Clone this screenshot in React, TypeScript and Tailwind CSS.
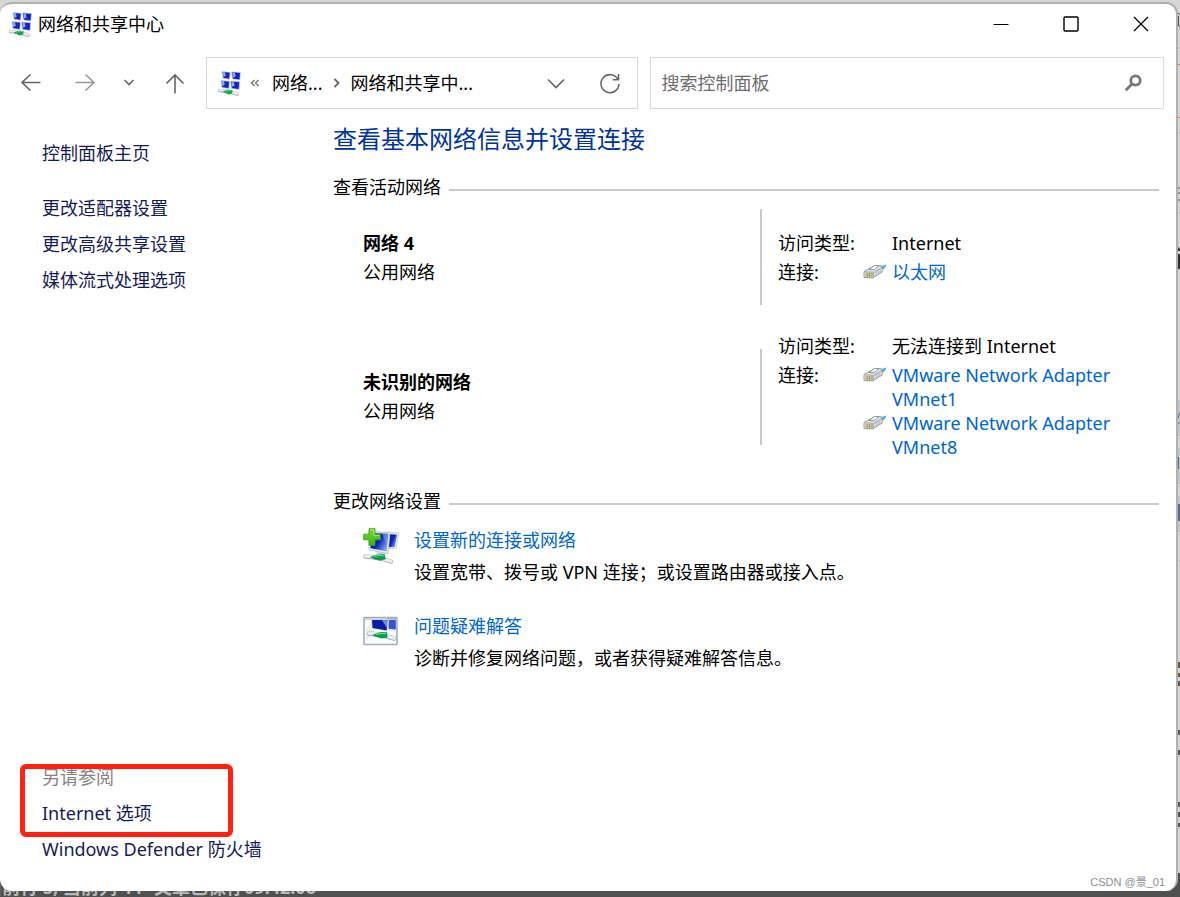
import { twMerge } from "tailwind-merge";

interface IconProps {
    className?: string;
}

function NetworkCenterIcon({ className }: IconProps) {
    return (
        <svg viewBox="0 0 24 26" className={twMerge("h-[26px] w-6 shrink-0", className)} aria-hidden="true">
            <g stroke="#d9dfec" strokeWidth="0.7">
                <path d="M4 1.500l8.200.7-.6 7-6.600-.9z" fill="#1222c4" />
                <path d="M13.500 1.800l9 .6-.6 7.600-7.400-1z" fill="#1222c4" />
                <path d="M3 10.500l8.500.8-.6 7.200-7-.9z" fill="#1222c4" />
                <path d="M12.500 11l9.200.7-.6 7.800-7.600-1z" fill="#1222c4" />
            </g>
            <path d="M4.800 2l2.200.2.7 3.600-2.300 1.400zM14.300 2.300l2.500.2.800 3.700-2.700 1.500zM3.800 11l2.200.2.800 3.600-2.500 1.400zM13.300 11.500l2.500.2.900 3.700-2.900 1.500z" fill="#8fa9f2" />
            <path d="M1.500 20.500l6 .8 6 1.200 5.500 1.700" stroke="#a7b0b3" strokeWidth="3.500" strokeLinecap="round" fill="none" />
            <path d="M1.500 20.200l6 .8 6 1.200 5.500 1.700" stroke="#e9eeee" strokeWidth="2.300" strokeLinecap="round" fill="none" />
            <path d="M4.500 21.500l6-2 4 .8-.3 3.200-3.700 1z" fill="#0fa655" />
            <path d="M7 21.300l4-1.100 2.500.5" stroke="#4fd684" strokeWidth="0.900" fill="none" />
        </svg>
    );
}

function EthernetIcon() {
    return (
        <svg viewBox="0 0 24 16" className="mt-1 h-4 w-6 shrink-0" aria-hidden="true">
            <path d="M16 2.500L23.500.5l-1.500 3.500-4 3z" fill="#58b7e0" />
            <path d="M1 7.500l10-5.500 7-.3 1.500 3.500-.5 3-9.500 5.800-8.500-.5z" fill="#dfe3e6" stroke="#7c8791" strokeWidth="0.800" />
            <path d="M1.500 7.800l9 .5 8.500-4.800M10.500 8.300v5.500" fill="none" stroke="#98a1a9" strokeWidth="0.800" />
            <path d="M6 5.500l5.500-4h4.500L11 5.800z" fill="#f5f7f8" stroke="#7c8791" strokeWidth="0.800" />
            <path d="M3 8.800v4.400M5.400 8.800v4.400M7.800 8.800v4.400" stroke="#d8c65b" strokeWidth="1.200" />
            <path d="M4.200 8.800v4.400M6.600 8.800v4.400M9 8.800v4.400" stroke="#70694f" strokeWidth="0.700" />
            <path d="M12 9l5.500-3.500M12 11l6-4" stroke="#9da7ae" strokeWidth="0.700" />
        </svg>
    );
}

function NewConnectionIcon() {
    return (
        <svg viewBox="0 0 36 36" className="size-9 shrink-0" aria-hidden="true">
            <defs>
                <linearGradient id="screen" x1="0" y1="0" x2="1" y2="0.6">
                    <stop offset="0" stopColor="#0c1b9f" />
                    <stop offset="0.550" stopColor="#0b22b4" />
                    <stop offset="1" stopColor="#7ba0ef" />
                </linearGradient>
                <linearGradient id="plus" x1="0" y1="0" x2="0" y2="1">
                    <stop offset="0" stopColor="#7bdb35" />
                    <stop offset="1" stopColor="#2fb80f" />
                </linearGradient>
            </defs>
            <path d="M22 4l13.800 1-2.800 15.500-8 .5z" fill="#e6eaf1" stroke="#bfc6d1" strokeWidth="0.700" />
            <path d="M25 6l9 .7-2.300 12.300-6 .2z" fill="url(#screen)" />
            <path d="M14 23l9 2-1 3-9-1.500z" fill="#cfd4d7" />
            <path d="M6 3.500l21 1-2 21L6 22z" fill="#e9ecf2" stroke="#b5bcc8" strokeWidth="0.800" />
            <path d="M7.500 5l17.800.8-1.700 17.400L7.500 20.200z" fill="url(#screen)" />
            <path d="M19 5.500l6 .3-1 11z" fill="#8dabf0" opacity="0.550" />
            <path d="M2.500 28.500l8 .8 9 1.700 8.500 2.500" stroke="#a3aca9" strokeWidth="4.400" strokeLinecap="round" fill="none" />
            <path d="M2.500 28.200l8 .8 9 1.700 8.500 2.500" stroke="#e9efed" strokeWidth="3.200" strokeLinecap="round" fill="none" />
            <path d="M7 29l8-2.500 6.500-.2 1.300 5-6 1.200-6-1.500z" fill="#0c9a4c" />
            <path d="M11 28.500l5-1 4.500.3" stroke="#64de98" strokeWidth="1.200" fill="none" />
            <path d="M6 .7h6v5.500h5.300v5.600H12v5.500H6v-5.500H.7V6.200H6z" fill="url(#plus)" stroke="#3ea51f" strokeWidth="0.900" />
            <path d="M7 1.800h3.800v5.500h5.300" stroke="#b5f37d" strokeWidth="0.800" fill="none" />
        </svg>
    );
}

function TroubleshootIcon() {
    return (
        <svg viewBox="0 0 36 30" className="mt-0.5 h-[30px] w-9 shrink-0" aria-hidden="true">
            <rect x="1" y="1.500" width="33" height="27" rx="0.500" fill="#fafbfc" stroke="#a2abb6" strokeWidth="1.500" />
            <path d="M1.800 3h31.400" stroke="#ccd3dc" strokeWidth="1.800" />
            <path d="M25 2.800h1.200M28.400 2.800h1.200M31.400 2.800h1.200" stroke="#5d6672" strokeWidth="1" />
            <path d="M3 26V13L9 4h10z" fill="#eceff3" />
            <path d="M8 4h24.800v11.500L9 13z" fill="#e3e8f1" />
            <path d="M9 4h15.500l-.8 10.500L9.500 12z" fill="#0d1ba6" />
            <path d="M26 4h6.800v9.500l-7.300-.7z" fill="#3457c8" />
            <path d="M19 4h5.500l-.6 8z" fill="#6c8ae6" />
            <path d="M6 17.500l9 1 8 1.700 8 2.300" stroke="#a3aca9" strokeWidth="4.600" strokeLinecap="round" fill="none" />
            <path d="M6 17.200l9 1 8 1.700 8 2.300" stroke="#ebf0ee" strokeWidth="3.300" strokeLinecap="round" fill="none" />
            <path d="M9 19l9-3 6 .2.500 5.300-6 1-6-1.700z" fill="#0c9a4c" />
            <path d="M13 18.500l5-1.200 5 .4" stroke="#62dc94" strokeWidth="1.200" fill="none" />
        </svg>
    );
}

interface NavButtonProps {
    label: string;
    path: string;
    className?: string;
}

function NavButton({ label, path, className }: NavButtonProps) {
    return (
        <button type="button" aria-label={label} className={twMerge("flex h-8 shrink-0 items-center justify-center text-[#666]", className)}>
            <svg viewBox="0 0 24 24" className="size-6" fill="none" stroke="currentColor" strokeWidth="1.600" aria-hidden="true">
                <path d={path} />
            </svg>
        </button>
    );
}

function TitleBar() {
    return (
        <header className="flex h-10 items-center pl-[9px]">
            <NetworkCenterIcon />
            <h1 className="ml-[5px] flex-1">网络和共享中心</h1>
            <button type="button" aria-label="最小化" className="flex h-10 w-[70px] items-center justify-center">
                <svg viewBox="0 0 16 16" className="size-4" aria-hidden="true"><path d="M.5 8.500h15" stroke="#000" /></svg>
            </button>
            <button type="button" aria-label="最大化" className="flex h-10 w-[70px] items-center justify-center">
                <svg viewBox="0 0 16 16" className="size-4" aria-hidden="true"><rect x="1" y="1" width="14" height="14" rx="1" fill="none" stroke="#000" strokeWidth="1.400" /></svg>
            </button>
            <button type="button" aria-label="关闭" className="flex h-10 w-[70px] items-center justify-center">
                <svg viewBox="0 0 16 16" className="size-4" aria-hidden="true"><path d="M1 1l14 14M15 1L1 15" stroke="#000" strokeWidth="1.300" /></svg>
            </button>
        </header>
    );
}

function Toolbar() {
    return (
        <nav className="mt-[13px] flex items-center pr-3">
            <div className="flex w-[206px] shrink-0 items-center pl-[15px]">
                <NavButton label="后退" path="M21.500 11.500H3M11.500 3.500L3 11.500l8.500 8" className="w-8" />
                <NavButton label="前进" path="M2.500 11.500H21M12.500 3.500l8.500 8-8.500 8" className="ml-[22px] w-8 text-[#999]" />
                <NavButton label="最近浏览的位置" path="M7.500 9l4.500 4.500L16.500 9" className="ml-4 w-6" />
                <NavButton label="向上" path="M12 22.500V4M3.500 12.500L12 4l8.500 8.500" className="ml-[18px] w-8" />
            </div>
            <div className="grid flex-1 grid-cols-[16fr_19fr] gap-3">
                <div className="flex h-[52px] items-center border border-[#d9d9d9] pl-[11px]">
                    <NetworkCenterIcon />
                    <span className="ml-2 text-[#666]">
                        <svg viewBox="0 0 10 10" className="size-2.5" fill="none" stroke="currentColor" strokeWidth="1.200" aria-hidden="true"><path d="M4.500 2L1.500 5l3 3M8.500 2l-3 3 3 3" /></svg>
                    </span>
                    <button type="button" className="ml-3">网络...</button>
                    <svg viewBox="0 0 10 10" className="mx-[9px] size-2.5" fill="none" stroke="#666" strokeWidth="1.800" aria-hidden="true"><path d="M3.500 1l4 4-4 4" /></svg>
                    <button type="button">网络和共享中...</button>
                    <div className="ml-auto flex items-center gap-[22px] pr-[11px]">
                        <NavButton label="历史记录" path="M4 8.500l8 8 8-8" className="w-8" />
                        <button type="button" aria-label="刷新" className="flex size-8 items-center justify-center">
                            <svg viewBox="0 0 24 24" className="size-6" fill="none" stroke="#666" strokeWidth="1.600" aria-hidden="true">
                                <path d="M20 8.500A9 9 0 1 0 21 13M20.500 3v5.800h-5.800" />
                            </svg>
                        </button>
                    </div>
                </div>
                <label className="flex h-[52px] items-center border border-[#d9d9d9] pl-2.5 pr-5">
                    <input type="search" aria-label="搜索控制面板" placeholder="搜索控制面板" className="min-w-0 flex-1 outline-none placeholder:text-[#6d6d6d]" />
                    <svg viewBox="0 0 20 20" className="size-5" fill="none" stroke="#767676" aria-hidden="true">
                        <circle cx="12.500" cy="7.500" r="4.700" strokeWidth="2.800" />
                        <path d="M9 11L2.800 17.200" strokeWidth="2.800" />
                    </svg>
                </label>
            </div>
        </nav>
    );
}

function Sidebar() {
    return (
        <aside className="flex w-[333px] shrink-0 flex-col pt-8 pb-[30px] pl-[42px] text-[#151c55]">
            <a href="#home" className="self-start">控制面板主页</a>
            <ul className="mt-[31px] flex flex-col gap-3">
                <li><a href="#adapter">更改适配器设置</a></li>
                <li><a href="#sharing">更改高级共享设置</a></li>
                <li><a href="#media">媒体流式处理选项</a></li>
            </ul>
            <section className="mt-auto flex flex-col gap-3">
                <div className="relative flex flex-col gap-3">
                    <h2 className="text-[#838383]">另请参阅</h2>
                    <a href="#internet">Internet 选项</a>
                    <span className="pointer-events-none absolute -top-px -bottom-3 -left-[22px] w-[213px] rounded-md border-[5px] border-[#ff2212]" />
                </div>
                <a href="#firewall">Windows Defender 防火墙</a>
            </section>
        </aside>
    );
}

function SectionTitle({ title, className }: { title: string; className?: string }) {
    return (
        <div className={twMerge("flex items-center gap-2", className)}>
            <h3>{title}</h3>
            <span className="mt-1.5 h-0.5 flex-1 bg-[#c9c9c9]" />
        </div>
    );
}

interface NetworkRowProps {
    name: string;
    access: string;
    connections: string[];
    className?: string;
}

function NetworkRow({ name, access, connections, className }: NetworkRowProps) {
    return (
        <div className={twMerge("grid grid-cols-[1fr_2px_1fr] items-center pl-[30px]", className)}>
            <div className="flex flex-col gap-[5px]">
                <h4 className="font-bold">{name}</h4>
                <p>公用网络</p>
            </div>
            <span className="h-24 bg-[#c9c9c9]" />
            <dl className="grid grid-cols-[85px_1fr] gap-y-[5px] pl-4">
                <dt>访问类型:</dt>
                <dd className="pl-[29px]">{access}</dd>
                <dt>连接:</dt>
                <dd>
                    {connections.map((connection) => (
                        <a key={connection} href="#status" className="flex items-start gap-[5px] text-[#0066cc]">
                            <EthernetIcon />
                            <span>{connection}</span>
                        </a>
                    ))}
                </dd>
            </dl>
        </div>
    );
}

interface TaskProps {
    icon: React.ReactNode;
    title: string;
    description: string;
}

function Task({ icon, title, description }: TaskProps) {
    return (
        <div className="flex items-start gap-[15px]">
            {icon}
            <div className="flex flex-col items-start gap-2">
                <a href="#task" className="text-[#0066cc]">{title}</a>
                <p>{description}</p>
            </div>
        </div>
    );
}

function Content() {
    return (
        <main className="min-w-0 flex-1 pt-3 pr-[17px]">
            <h2 className="text-2xl leading-9 text-[#003399]">查看基本网络信息并设置连接</h2>
            <SectionTitle title="查看活动网络" className="mt-[18px]" />
            <NetworkRow name="网络 4" access="Internet" connections={["以太网"]} className="mt-2.5" />
            <NetworkRow
                name="未识别的网络"
                access="无法连接到 Internet"
                connections={["VMware Network Adapter VMnet1", "VMware Network Adapter VMnet8"]}
                className="mt-[29px]"
            />
            <SectionTitle title="更改网络设置" className="mt-[30px]" />
            <div className="mt-[15px] flex flex-col gap-[30px] pl-[30px]">
                <Task icon={<NewConnectionIcon />} title="设置新的连接或网络" description="设置宽带、拨号或 VPN 连接；或设置路由器或接入点。" />
                <Task icon={<TroubleshootIcon />} title="问题疑难解答" description="诊断并修复网络问题，或者获得疑难解答信息。" />
            </div>
        </main>
    );
}

// Parts of the page behind the window that show past its right and bottom edges
function Backdrop() {
    return (
        <div className="absolute inset-0 overflow-hidden" aria-hidden="true">
            <svg className="absolute top-0 right-0 h-[873px] w-1" viewBox="0 0 4 873">
                <path d="M0 48h4M0 133h4M0 213h4M0 561h4" stroke="#b5b5b5" />
                <path d="M0 64.500h4M0 117.500h4" stroke="#e0735c" />
                <path d="M2 13l2 2M2.500 16v10h1.500M2 188h2M2 193h2M2 200h2" stroke="#555" fill="none" />
                <path d="M1 246l3 3v2H1zM1 254h3v15H1z" fill="#303030" />
                <path d="M0 400h4v36H0zM0 448h4v36H0zM0 496h4v36H0z" fill="#c3c8cf" />
                <path d="M0 424l4-12M0 423h4M2.500 457v12" stroke="#536990" />
                <path d="M2 504h2v17H2z" fill="#52699c" />
                <path d="M2 662h2v6H2zM2 673h2v4H2zM2 681h2v5H2z" fill="#6c5745" />
                <path d="M0 730h4v5H0zM0 750h4v5H0zM0 802h4v5H0zM1 812h3v5H1zM0 823h4v4H0z" fill="#585858" />
            </svg>
            <div className="absolute inset-x-0 bottom-0 flex h-6 items-center gap-3 bg-[#505050] pt-1 text-lg font-bold whitespace-pre text-[#b8b8b8]">
                <span className="-ml-4">当前行 5, 当前列 44</span>
                <span>文章已保存09:42:06</span>
            </div>
        </div>
    );
}

export default function App() {
    return (
        <div className="relative flex min-h-screen flex-col bg-[#d6d6d6] pt-0.5 pr-0.5 pb-1.5 font-['Noto_Sans','Noto_Sans_CJK_SC',sans-serif] text-lg leading-6 text-black">
            <Backdrop />
            <div className="relative flex flex-1 flex-col rounded-xl border-t-2 border-r-2 border-[#b0b0b0] bg-white">
                <TitleBar />
                <Toolbar />
                <div className="flex flex-1">
                    <Sidebar />
                    <Content />
                </div>
                <span className="absolute right-[11px] bottom-px font-['Liberation_Sans','Noto_Sans_CJK_SC',sans-serif] text-[11px] leading-4 text-[#8e8e8e]">CSDN @景_01</span>
            </div>
        </div>
    );
}
